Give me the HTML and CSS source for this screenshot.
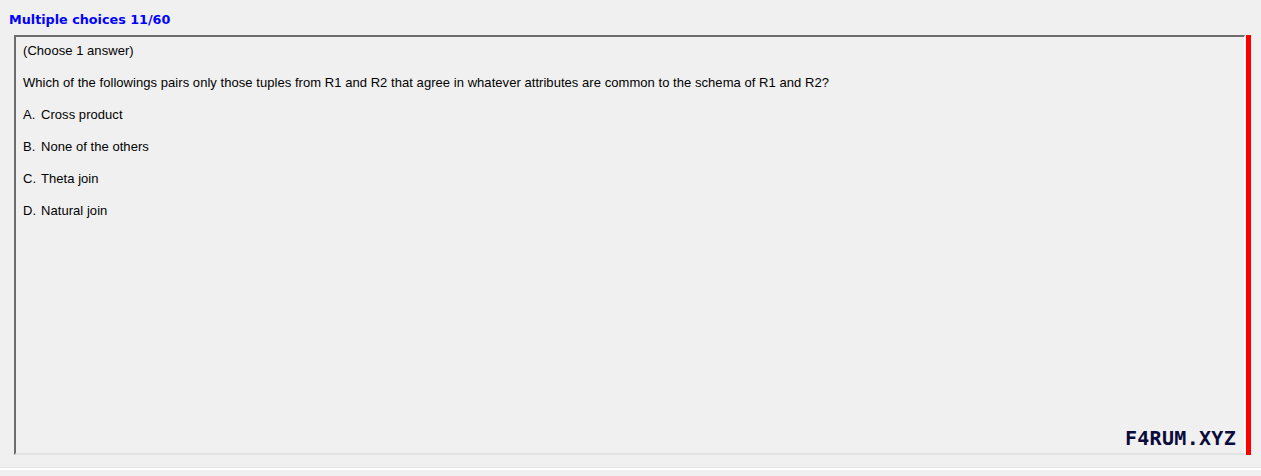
FILE: index.html
```html
<!DOCTYPE html>
<html>
<head>
<meta charset="utf-8">
<link rel="stylesheet" href="styles.css">
</head>
<body>
<div class="title">Multiple choices 11/60</div>
<div class="row">
  <div class="panel">
    <div class="content">
      <p class="line">(Choose 1 answer)</p>
      <p class="line">Which of the followings pairs only those tuples from R1 and R2 that agree in whatever attributes are common to the schema of R1 and R2?</p>
      <p class="line"><span class="key">A.</span>Cross product</p>
      <p class="line"><span class="key">B.</span>None of the others</p>
      <p class="line"><span class="key">C.</span>Theta join</p>
      <p class="line"><span class="key">D.</span>Natural join</p>
    </div>
    <div class="brand">F4RUM.XYZ</div>
  </div>
  <div class="redbar"></div>
</div>
<div class="sep"></div>
</body>
</html>
```
FILE: styles.css
```css
html, body {
  margin: 0;
  padding: 0;
  background: #f0f0f0;
  width: 1261px;
  height: 476px;
  overflow: hidden;
}
.title {
  font-family: "DejaVu Sans", sans-serif;
  font-weight: bold;
  font-size: 12.75px;
  color: #0000ff;
  padding: 12px 0 0 9px;
  height: 23px;
  line-height: 15px;
  box-sizing: border-box;
}
.row {
  display: flex;
  margin-top: 12px;
  margin-left: 14px;
  height: 420px;
}
.panel {
  width: 1231px;
  box-sizing: border-box;
  border-top: 2px solid #6d6d6d;
  border-left: 2px solid #6d6d6d;
  border-bottom: 2px solid #e3e3e3;
  border-right: 1px solid #ffffff;
  display: flex;
  flex-direction: column;
  justify-content: space-between;
  padding: 6px 8px 4px 7px;
}
.content {
  font-family: "Liberation Sans", Arial, sans-serif;
  font-size: 13px;
  letter-spacing: 0.05px;
  color: #000;
}
.line {
  margin: 0 0 17px 0;
  line-height: 15px;
}
.key {
  display: inline-block;
  width: 18px;
}
.brand {
  align-self: flex-end;
  font-family: "DejaVu Sans Mono", monospace;
  font-weight: bold;
  font-size: 20px;
  color: #0b0b3b;
  line-height: 22px;
  letter-spacing: 0.3px;
}
.redbar {
  width: 5px;
  margin-left: 1px;
  background: #ff0000;
}
.sep {
  margin-top: 12px;
  height: 0;
  border-top: 1px solid #e6e6e6;
  border-bottom: 2px solid #ffffff;
}
```
